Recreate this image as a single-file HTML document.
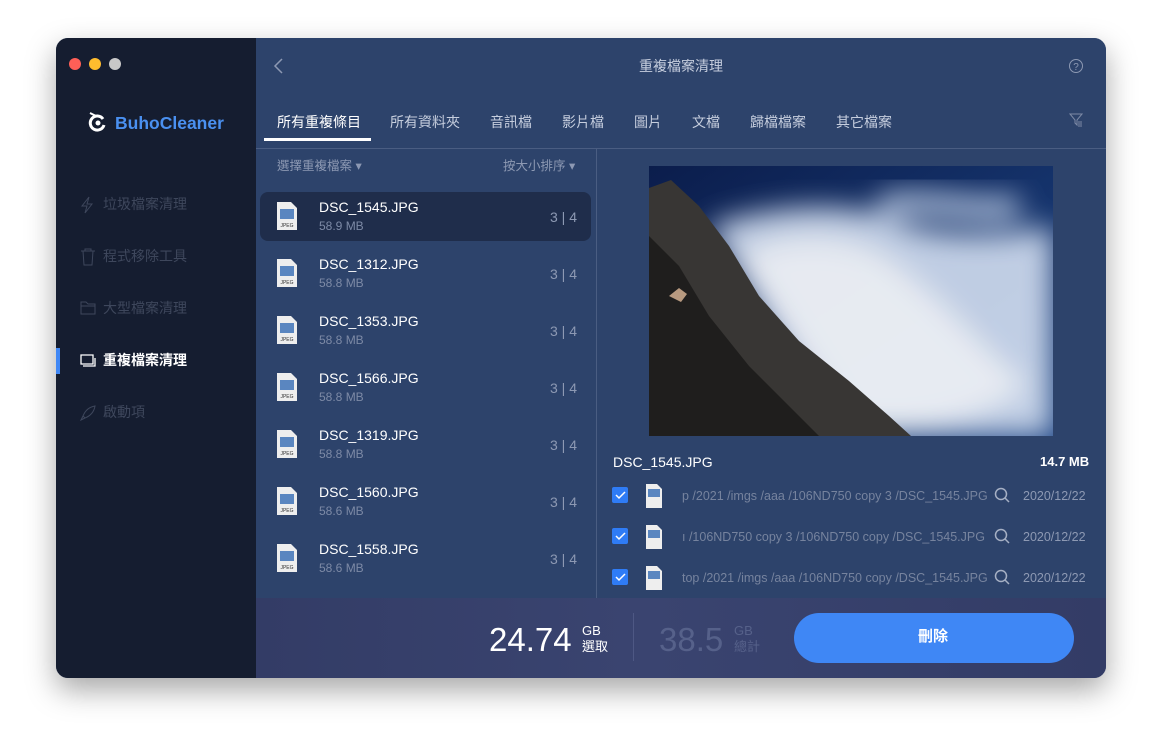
<!DOCTYPE html>
<html><head><meta charset="utf-8"><style>
*{margin:0;padding:0;box-sizing:border-box}
body{width:1162px;height:752px;background:#fff;font-family:"Liberation Sans","Noto Sans CJK TC",sans-serif;position:relative;overflow:hidden}
.win{position:absolute;left:56px;top:38px;width:1050px;height:640px;border-radius:12px;overflow:hidden;box-shadow:0 12px 30px rgba(0,0,0,.35);background:#2d436b}
.side{position:absolute;left:0;top:0;width:200px;height:640px;background:#151d30}
.dot{position:absolute;top:20px;width:12px;height:12px;border-radius:50%}
.nav{position:absolute;left:47px;font-size:14px;color:#3e475c;line-height:20px}
.ic{position:absolute;left:24px}
.t{position:absolute;color:#fff;line-height:1.2}
.row{position:absolute;left:4px;width:331px;height:49px;border-radius:8px}
.row .n{position:absolute;left:59px;top:7px;font-size:14px;color:#fff}
.row .s{position:absolute;left:59px;top:27px;font-size:12px;color:#7d8aa6}
.row .c{position:absolute;right:14px;top:17px;font-size:14px;color:#8d99b3}
.fi{position:absolute;left:16px;top:9px;width:22px;height:30px}
.cb{position:absolute;left:556px;width:16px;height:16px;background:#2f7cf6;border-radius:2px}
.p{position:absolute;left:626px;font-size:12.5px;color:#76839e;white-space:nowrap}
.d{position:absolute;left:967px;font-size:12.5px;color:#8d99b3}
.tab{top:76px;font-size:14px;color:#c6cede}
</style></head><body>
<div class="win">
<div class="side">
<div class="dot" style="left:13px;background:#fe5f57"></div>
<div class="dot" style="left:33px;background:#febc2e"></div>
<div class="dot" style="left:53px;background:#c8c8c8"></div>
<svg style="position:absolute;left:32px;top:72px" width="20" height="22" viewBox="0 0 20 22"><path d="M15 9a7 7 0 1 0 1 6" stroke="#fff" stroke-width="3" fill="none"/><circle cx="10" cy="13" r="2.5" fill="#fff"/><path d="M2 3l6 3" stroke="#fff" stroke-width="2"/></svg>
<div class="t" style="left:59px;top:75px;font-size:17.5px;font-weight:bold;color:#4a90f0">BuhoCleaner</div>
<svg class="ic" style="top:158px" width="14" height="18"><path d="M9 1L2 10h5l-2 7 7-9H7z" stroke="#3e475c" fill="none"/></svg>
<div class="nav" style="top:156px">垃圾檔案清理</div>
<svg class="ic" style="top:210px" width="16" height="18"><path d="M1 3h14M5 3V1h6v2M3 3l1 14h8l1-14" stroke="#3e475c" fill="none"/></svg>
<div class="nav" style="top:208px">程式移除工具</div>
<svg class="ic" style="top:263px" width="16" height="14"><path d="M1 1h5l2 2h7v10H1z M1 5h14" stroke="#3e475c" fill="none"/></svg>
<div class="nav" style="top:260px">大型檔案清理</div>
<div style="position:absolute;left:0;top:310px;width:4px;height:26px;background:#3f87f5"></div>
<svg class="ic" style="top:316px" width="16" height="14"><path d="M1 1h12v9H1z M3 12h12V4" stroke="#fff" fill="none" stroke-width="1.3"/></svg>
<div class="nav" style="top:312px;color:#fff;font-weight:bold">重複檔案清理</div>
<svg class="ic" style="top:367px" width="16" height="16"><path d="M15 1C9 2 5 6 3 11l2 2c5-2 9-6 10-12zM3 11l-2 4 4-2" stroke="#3e475c" fill="none"/></svg>
<div class="nav" style="top:364px">啟動項</div>
</div>
<div style="position:absolute;left:200px;top:0;width:850px;height:560px;background:#2d436b"></div>
<svg style="position:absolute;left:216px;top:19px" width="12" height="18"><path d="M10 2L3 9l7 7" stroke="#8d99b3" stroke-width="1.5" fill="none"/></svg>
<div class="t" style="left:583px;top:20px;font-size:14px;color:#c6cede">重複檔案清理</div>
<svg style="position:absolute;left:1012px;top:20px" width="16" height="16"><circle cx="8" cy="8" r="6.5" stroke="#8d99b3" fill="none"/><text x="8" y="12" font-size="10" fill="#8d99b3" text-anchor="middle" font-family="Liberation Sans">?</text></svg>
<div class="t tab" style="left:221px;color:#fff">所有重複條目</div>
<div style="position:absolute;left:208px;top:100px;width:107px;height:3px;background:#fff"></div>
<div class="t tab" style="left:334px">所有資料夾</div>
<div class="t tab" style="left:434px">音訊檔</div>
<div class="t tab" style="left:506px">影片檔</div>
<div class="t tab" style="left:578px">圖片</div>
<div class="t tab" style="left:636px">文檔</div>
<div class="t tab" style="left:694px">歸檔檔案</div>
<div class="t tab" style="left:780px">其它檔案</div>
<svg style="position:absolute;left:1013px;top:75px" width="14" height="14"><path d="M1 1h12l-5 6v5l-2-2V7z" stroke="#7d8aa6" fill="none"/><path d="M9 9h4M9 11h4M9 13h4" stroke="#7d8aa6"/></svg>
<div style="position:absolute;left:200px;top:110px;width:850px;height:1px;background:#4a5d82"></div>
<div style="position:absolute;left:540px;top:111px;width:1px;height:449px;background:#4a5d82"></div>
<div class="t" style="left:221px;top:121px;font-size:12.5px;color:#8d99b3">選擇重複檔案 ▾</div>
<div class="t" style="left:447px;top:121px;font-size:12.5px;color:#8d99b3">按大小排序 ▾</div>
<div style="position:absolute;left:200px;top:146px">
<div class="row" style="top:8px;background:#1f2d4b"><svg class="fi"><path d="M1 1h14l6 6v22H1z" fill="#eee"/><rect x="4" y="8" width="14" height="10" fill="#5a86c0"/><text x="11" y="26" font-size="5" text-anchor="middle" fill="#333">JPEG</text></svg><div class="n">DSC_1545.JPG</div><div class="s">58.9 MB</div><div class="c">3 | 4</div></div>
<div class="row" style="top:65px"><svg class="fi"><path d="M1 1h14l6 6v22H1z" fill="#eee"/><rect x="4" y="8" width="14" height="10" fill="#5a86c0"/><text x="11" y="26" font-size="5" text-anchor="middle" fill="#333">JPEG</text></svg><div class="n">DSC_1312.JPG</div><div class="s">58.8 MB</div><div class="c">3 | 4</div></div>
<div class="row" style="top:122px"><svg class="fi"><path d="M1 1h14l6 6v22H1z" fill="#eee"/><rect x="4" y="8" width="14" height="10" fill="#5a86c0"/><text x="11" y="26" font-size="5" text-anchor="middle" fill="#333">JPEG</text></svg><div class="n">DSC_1353.JPG</div><div class="s">58.8 MB</div><div class="c">3 | 4</div></div>
<div class="row" style="top:179px"><svg class="fi"><path d="M1 1h14l6 6v22H1z" fill="#eee"/><rect x="4" y="8" width="14" height="10" fill="#5a86c0"/><text x="11" y="26" font-size="5" text-anchor="middle" fill="#333">JPEG</text></svg><div class="n">DSC_1566.JPG</div><div class="s">58.8 MB</div><div class="c">3 | 4</div></div>
<div class="row" style="top:236px"><svg class="fi"><path d="M1 1h14l6 6v22H1z" fill="#eee"/><rect x="4" y="8" width="14" height="10" fill="#5a86c0"/><text x="11" y="26" font-size="5" text-anchor="middle" fill="#333">JPEG</text></svg><div class="n">DSC_1319.JPG</div><div class="s">58.8 MB</div><div class="c">3 | 4</div></div>
<div class="row" style="top:293px"><svg class="fi"><path d="M1 1h14l6 6v22H1z" fill="#eee"/><rect x="4" y="8" width="14" height="10" fill="#5a86c0"/><text x="11" y="26" font-size="5" text-anchor="middle" fill="#333">JPEG</text></svg><div class="n">DSC_1560.JPG</div><div class="s">58.6 MB</div><div class="c">3 | 4</div></div>
<div class="row" style="top:350px"><svg class="fi"><path d="M1 1h14l6 6v22H1z" fill="#eee"/><rect x="4" y="8" width="14" height="10" fill="#5a86c0"/><text x="11" y="26" font-size="5" text-anchor="middle" fill="#333">JPEG</text></svg><div class="n">DSC_1558.JPG</div><div class="s">58.6 MB</div><div class="c">3 | 4</div></div>
</div>
<svg style="position:absolute;left:593px;top:128px" width="404" height="270" viewBox="0 0 404 270">
<defs><linearGradient id="sk" x1="0" y1="0" x2="1" y2="1"><stop offset="0" stop-color="#0b1d4c"/><stop offset="1" stop-color="#1d4585"/></linearGradient>
<filter id="bl"><feGaussianBlur stdDeviation="14"/></filter></defs>
<rect width="404" height="270" fill="url(#sk)"/>
<g filter="url(#bl)" opacity=".95">
<path d="M60 60C120 40 200 30 260 60 330 80 404 60 404 60V270H180z" fill="#c9d6ea"/>
<path d="M90 90C150 60 220 70 260 110 300 140 340 190 380 220 320 260 260 270 200 260z" fill="#f3f5f9"/>
<path d="M230 40C280 30 330 50 370 40" stroke="#b9c9e2" stroke-width="22" fill="none"/>
</g>
<path d="M0 22L22 14 50 40 80 80 110 130 150 175 200 215 240 250 262 270H0z" fill="#383634"/>
<path d="M0 70L30 100 60 150 100 200 150 250 170 270H0z" fill="#1f1e1d"/>
<path d="M20 130l10-8 8 6-6 8z" fill="#b89a80"/>
</svg>
<div class="t" style="left:557px;top:416px;font-size:14px">DSC_1545.JPG</div>
<div class="t" style="left:984px;top:416px;font-size:13px;font-weight:bold">14.7 MB</div>
<div class="cb" style="top:449px"></div><div class="cb" style="top:490px"></div><div class="cb" style="top:531px"></div>
<svg style="position:absolute;left:558px;top:451px" width="12" height="94"><path d="M2 6l3 3 6-6M2 47l3 3 6-6M2 88l3 3 6-6" stroke="#fff" stroke-width="1.5" fill="none"/></svg>
<svg style="position:absolute;left:589px;top:446px" width="18" height="110"><g fill="#eee"><path d="M1 0h11l5 5v19H1z"/><path d="M1 41h11l5 5v19H1z"/><path d="M1 82h11l5 5v19H1z"/></g><g fill="#5a86c0"><rect x="3" y="5" width="12" height="8"/><rect x="3" y="46" width="12" height="8"/><rect x="3" y="87" width="12" height="8"/></g></svg>
<div class="p" style="top:451px">p /2021 /imgs /aaa /106ND750 copy 3 /DSC_1545.JPG</div>
<div class="p" style="top:492px">ı /106ND750 copy 3 /106ND750 copy /DSC_1545.JPG</div>
<div class="p" style="top:533px">top /2021 /imgs /aaa /106ND750 copy /DSC_1545.JPG</div>
<svg style="position:absolute;left:938px;top:449px" width="18" height="100"><g stroke="#a6b0c4" stroke-width="1.5" fill="none"><circle cx="7" cy="7" r="5.5"/><path d="M11 11l4 4"/><circle cx="7" cy="48" r="5.5"/><path d="M11 52l4 4"/><circle cx="7" cy="89" r="5.5"/><path d="M11 93l4 4"/></g></svg>
<div class="d" style="top:451px">2020/12/22</div><div class="d" style="top:492px">2020/12/22</div><div class="d" style="top:533px">2020/12/22</div>
<div style="position:absolute;left:200px;top:560px;width:850px;height:80px;background:linear-gradient(90deg,#333c66,#3a4470 45%,#333c66)"></div>
<div class="t" style="left:433px;top:582px;font-size:33px">24.74</div>
<div class="t" style="left:526px;top:585px;font-size:13px;line-height:16px">GB<br>選取</div>
<div style="position:absolute;left:577px;top:575px;width:1px;height:48px;background:#4e5884"></div>
<div class="t" style="left:603px;top:582px;font-size:33px;color:#56618a">38.5</div>
<div class="t" style="left:678px;top:585px;font-size:13px;line-height:16px;color:#56618a">GB<br>總計</div>
<div style="position:absolute;left:738px;top:575px;width:280px;height:50px;border-radius:25px;background:#3f87f5"></div>
<div class="t" style="left:862px;top:590px;font-size:15px;font-weight:bold">刪除</div>
</div>
</body></html>
